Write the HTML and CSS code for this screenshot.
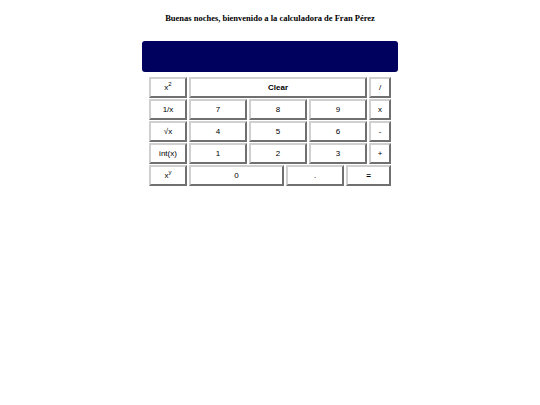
FILE: index.html
```html
<!DOCTYPE html>
<html lang="es">
<head>
<meta charset="utf-8">
<title>Calculadora</title>
<link rel="stylesheet" href="styles.css">
</head>
<body>
<h1 class="title">Buenas noches, bienvenido a la calculadora de Fran Pérez</h1>
<div class="calc">
  <div class="display"></div>
  <div class="keys">
    <div class="row">
      <button class="key fn">x<sup>2</sup></button>
      <button class="key clear">Clear</button>
      <button class="key op">/</button>
    </div>
    <div class="row">
      <button class="key fn">1/x</button>
      <button class="key num">7</button>
      <button class="key num">8</button>
      <button class="key num">9</button>
      <button class="key op">x</button>
    </div>
    <div class="row">
      <button class="key fn">√x</button>
      <button class="key num">4</button>
      <button class="key num">5</button>
      <button class="key num">6</button>
      <button class="key op">-</button>
    </div>
    <div class="row">
      <button class="key fn">int(x)</button>
      <button class="key num">1</button>
      <button class="key num">2</button>
      <button class="key num">3</button>
      <button class="key op">+</button>
    </div>
    <div class="row">
      <button class="key fn">x<sup>y</sup></button>
      <button class="key zero">0</button>
      <button class="key num">.</button>
      <button class="key eq">=</button>
    </div>
  </div>
</div>
</body>
</html>
```
FILE: styles.css
```css
html, body {
  margin: 0;
  padding: 0;
  background: #ffffff;
}
body {
  width: 540px;
  height: 405px;
}
.title {
  margin: 0;
  padding-top: 12px;
  height: 12px;
  line-height: 12px;
  text-align: center;
  font-family: "Liberation Serif", "Times New Roman", serif;
  font-size: 8.5px;
  font-weight: bold;
  color: #000;
}
.calc {
  width: 256px;
  margin: 17px 0 0 142px;
}
.display {
  height: 31px;
  background: #00005e;
  border-radius: 3px;
}
.keys {
  display: flex;
  flex-direction: column;
  gap: 1px;
  margin: 5px 0 0 7px;
  width: 242px;
}
.row {
  display: flex;
  gap: 2px;
}
.key {
  box-sizing: border-box;
  height: 21px;
  margin: 0;
  padding: 0;
  background: #ffffff;
  border: 2px solid;
  border-color: #d0d0d0 #707070 #707070 #d0d0d0;
  font-family: "Liberation Sans", Arial, sans-serif;
  font-size: 8px;
  color: #000;
  line-height: 17px;
  text-align: center;
}
.key sup {
  font-size: 6px;
  line-height: 0;
  vertical-align: 4px;
}
.fn { width: 38px; }
.num { width: 58px; }
.op { width: 22px; }
.clear { width: 178px; font-weight: bold; }
.zero { width: 95px; }
.eq { width: 45px; font-weight: bold; }
```
